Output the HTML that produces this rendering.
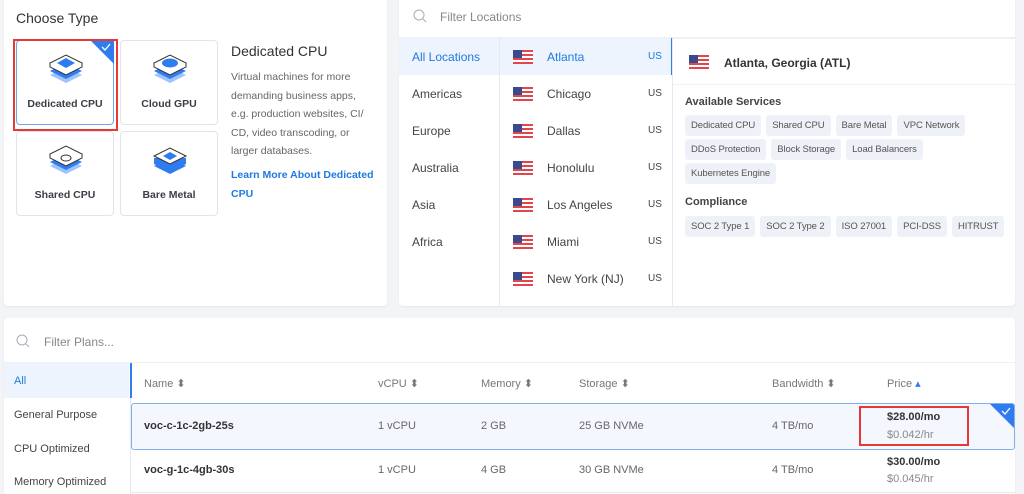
<!DOCTYPE html>
<html style="width:1024px;height:494px;overflow:hidden"><head><style>
*{box-sizing:border-box;margin:0;padding:0}
body{width:1024px;height:494px;background:#f3f4f7;font-family:"Liberation Sans",sans-serif;position:relative;overflow:hidden;color:#32363c}
.p{position:absolute;background:#fff;border-radius:4px;box-shadow:0 1px 2px rgba(0,0,0,.06)}
.a{position:absolute}
.card{position:absolute;width:98px;height:85px;border:1px solid #e1e4ea;border-radius:4px;background:#fff;font-size:10.5px;font-weight:bold;color:#3a3e45;text-align:center}
.card .t{position:absolute;left:0;right:0;bottom:14px}
.reg{position:absolute;left:0;width:100px;height:37px;font-size:12px;color:#444;padding:12px 13px}
.city{position:absolute;left:0;width:173px;height:37px;font-size:12px;color:#444}
.city .f{position:absolute;left:13px;top:12px}
.city .n{position:absolute;left:47px;top:12px}
.city .c{position:absolute;left:148px;top:13px;font-size:10px}
.row{height:24px;white-space:nowrap}
.tag{display:inline-block;background:#eef1f7;border-radius:3px;font-size:9.5px;line-height:11px;color:#555;padding:5px 6px;margin:0 5px 0 0;letter-spacing:-0.1px}
.th{position:absolute;top:377px;font-size:11px;color:#777}
.td{position:absolute;font-size:11px;color:#666}
.cat{position:absolute;left:14px;font-size:11px;color:#444}
</style></head><body>
<svg width="0" height="0" style="position:absolute"><defs>
<g id="flag"><rect width="20" height="14" fill="#fff"/><rect y="0" width="20" height="2" fill="#e0464c"/><rect y="4" width="20" height="2" fill="#e0464c"/><rect y="8" width="20" height="2" fill="#e0464c"/><rect y="12" width="20" height="2" fill="#e0464c"/><rect width="9" height="8" fill="#3b4a8a"/></g>
</defs></svg>

<div class="p" style="left:4px;top:-4px;width:383px;height:310px">
<div class="a" style="left:12px;top:14px;font-size:14px;color:#333">Choose Type</div>
</div>
<div class="card" style="left:16px;top:40px;border-color:#6aa6f0">
<svg class="a" style="left:30px;top:12px" width="38" height="34" viewBox="0 0 38 34"><path d="M3 22 L19 30 L35 22 L19 14Z" fill="#9ec4fb"/><path d="M3 18 L19 26 L35 18 L19 10Z" fill="#2f7cf0"/><path d="M3 10 L19 18 L35 10 L19 2Z" fill="#fff" stroke="#333"/><path d="M3 10v4l16 8 16-8v-4" fill="#fff" stroke="#333"/><path d="M10 10 L19 5 L28 10 L19 15Z" fill="#2f7cf0"/></svg>
<div class="t">Dedicated CPU</div>
<svg class="a" style="right:-1px;top:-1px" width="24" height="24"><path d="M0 0H24V24Z" fill="#2f7cf0"/><path d="M12 7l3 3 5-6" stroke="#fff" fill="none" stroke-width="1.3"/></svg>
</div>
<div class="a" style="left:13px;top:39px;width:105px;height:92px;border:2px solid #e53935"></div>
<div class="card" style="left:120px;top:40px">
<svg class="a" style="left:30px;top:12px" width="38" height="34" viewBox="0 0 38 34"><path d="M3 22 L19 30 L35 22 L19 14Z" fill="#9ec4fb"/><path d="M3 18 L19 26 L35 18 L19 10Z" fill="#2f7cf0"/><path d="M3 10 L19 18 L35 10 L19 2Z" fill="#fff" stroke="#333"/><path d="M3 10v4l16 8 16-8v-4" fill="#fff" stroke="#333"/><ellipse cx="19" cy="10" rx="8" ry="4.5" fill="#2f7cf0"/></svg>
<div class="t">Cloud GPU</div></div>
<div class="card" style="left:16px;top:131px">
<svg class="a" style="left:30px;top:12px" width="38" height="34" viewBox="0 0 38 34"><path d="M3 22 L19 30 L35 22 L19 14Z" fill="#9ec4fb"/><path d="M3 18 L19 26 L35 18 L19 10Z" fill="#2f7cf0"/><path d="M3 10 L19 18 L35 10 L19 2Z" fill="#fff" stroke="#333"/><path d="M3 10v4l16 8 16-8v-4" fill="#fff" stroke="#333"/><ellipse cx="19" cy="14" rx="5" ry="3" fill="#fff" stroke="#333"/></svg>
<div class="t">Shared CPU</div></div>
<div class="card" style="left:120px;top:131px">
<svg class="a" style="left:30px;top:12px" width="38" height="34" viewBox="0 0 38 34"><path d="M3 22 L19 30 L35 22 L19 14Z" fill="#2f7cf0"/><path d="M3 14v6l16 8 16-8v-6" fill="#2f7cf0"/><path d="M3 12 L19 20 L35 12 L19 4Z" fill="#fff" stroke="#333"/><path d="M12 12 L19 8 L26 12 L19 16Z" fill="#2f7cf0"/></svg>
<div class="t">Bare Metal</div></div>
<div class="a" style="left:231px;top:43px;font-size:14px;color:#333">Dedicated CPU</div>
<div class="a" style="left:231px;top:68px;width:142px;font-size:10.5px;line-height:18.5px;color:#666">Virtual machines for more demanding business apps, e.g. production websites, CI/ CD, video transcoding, or larger databases.</div>
<div class="a" style="left:231px;top:166px;width:145px;font-size:10.5px;line-height:18.5px;color:#1f7ae0;font-weight:bold">Learn More About Dedicated CPU</div>

<div class="p" style="left:399px;top:-4px;width:616px;height:310px">
<svg class="a" style="left:14px;top:13px" width="14" height="14"><circle cx="6" cy="6" r="5" stroke="#aab" fill="none"/><path d="M10 10l3 3" stroke="#aab"/></svg>
<div class="a" style="left:41px;top:14px;font-size:12px;color:#888">Filter Locations</div>
<div class="a" style="left:0;top:41px;width:616px;height:2px;background:#eef0f3"></div>
<div class="a" style="left:0;top:42px;width:100px;height:268px">
<div class="reg" style="top:0;background:#edf4fe;color:#1f7ae0">All Locations</div>
<div class="reg" style="top:37px">Americas</div><div class="reg" style="top:74px">Europe</div>
<div class="reg" style="top:111px">Australia</div><div class="reg" style="top:148px">Asia</div><div class="reg" style="top:185px">Africa</div>
</div>
<div class="a" style="left:100px;top:42px;width:1px;height:268px;background:#e6e9ee"></div>
<div class="a" style="left:101px;top:42px;width:172px;height:268px">
<div class="city" style="top:0;background:#edf4fe;color:#1f7ae0;border-right:2px solid #2f7cf0"><svg class="f" width="20" height="14"><use href="#flag"/></svg><span class="n">Atlanta</span><span class="c">US</span></div>
<div class="city" style="top:37px"><svg class="f" width="20" height="14"><use href="#flag"/></svg><span class="n">Chicago</span><span class="c">US</span></div>
<div class="city" style="top:74px"><svg class="f" width="20" height="14"><use href="#flag"/></svg><span class="n">Dallas</span><span class="c">US</span></div>
<div class="city" style="top:111px"><svg class="f" width="20" height="14"><use href="#flag"/></svg><span class="n">Honolulu</span><span class="c">US</span></div>
<div class="city" style="top:148px"><svg class="f" width="20" height="14"><use href="#flag"/></svg><span class="n">Los Angeles</span><span class="c">US</span></div>
<div class="city" style="top:185px"><svg class="f" width="20" height="14"><use href="#flag"/></svg><span class="n">Miami</span><span class="c">US</span></div>
<div class="city" style="top:222px"><svg class="f" width="20" height="14"><use href="#flag"/></svg><span class="n">New York (NJ)</span><span class="c">US</span></div>
</div>
<div class="a" style="left:273px;top:42px;width:1px;height:268px;background:#e6e9ee"></div>
<svg class="a" style="left:290px;top:59px" width="20" height="14"><use href="#flag"/></svg>
<div class="a" style="left:325px;top:60px;font-size:12px;font-weight:bold;color:#333">Atlanta, Georgia (ATL)</div>
<div class="a" style="left:274px;top:88px;width:342px;height:1px;background:#eef0f3"></div>
<div class="a" style="left:286px;top:100px;font-size:11px;font-weight:bold;color:#444">Available Services</div>
<div class="a" style="left:286px;top:119px">
<div class="row"><span class="tag">Dedicated CPU</span><span class="tag">Shared CPU</span><span class="tag">Bare Metal</span><span class="tag">VPC Network</span></div>
<div class="row"><span class="tag">DDoS Protection</span><span class="tag">Block Storage</span><span class="tag">Load Balancers</span></div>
<div class="row"><span class="tag">Kubernetes Engine</span></div></div>
<div class="a" style="left:286px;top:200px;font-size:11px;font-weight:bold;color:#444">Compliance</div>
<div class="a" style="left:286px;top:220px"><div class="row"><span class="tag">SOC 2 Type 1</span><span class="tag">SOC 2 Type 2</span><span class="tag">ISO 27001</span><span class="tag">PCI-DSS</span><span class="tag">HITRUST</span></div></div>
</div>

<div class="p" style="left:4px;top:318px;width:1011px;height:190px">
<svg class="a" style="left:12px;top:16px" width="14" height="14"><circle cx="6" cy="6" r="5" stroke="#aab" fill="none"/><path d="M10 10l3 3" stroke="#aab"/></svg>
<div class="a" style="left:40px;top:17px;font-size:12px;color:#888">Filter Plans...</div>
<div class="a" style="left:0;top:44px;width:1011px;height:1px;background:#eef0f3"></div>
<div class="a" style="left:0;top:45px;width:125px;height:35px;background:#edf4fe"></div>
<div class="a" style="left:126px;top:45px;width:1px;height:150px;background:#e6e9ee"></div>
<div class="a" style="left:126px;top:45px;width:2px;height:35px;background:#2f7cf0"></div>
</div>
<div class="cat" style="top:375px;color:#1f7ae0">All</div>
<div class="cat" style="top:409px">General Purpose</div>
<div class="cat" style="top:443px">CPU Optimized</div>
<div class="cat" style="top:476px">Memory Optimized</div>
<div class="th" style="left:144px">Name ⬍</div><div class="th" style="left:378px">vCPU ⬍</div><div class="th" style="left:481px">Memory ⬍</div><div class="th" style="left:579px">Storage ⬍</div><div class="th" style="left:772px">Bandwidth ⬍</div><div class="th" style="left:887px">Price <span style="color:#2f7cf0">▴</span></div>
<div class="a" style="left:131px;top:403px;width:884px;height:47px;background:#f4f8fe;border:1px solid #7fb0f2;border-radius:3px;overflow:hidden">
<svg class="a" style="right:0;top:0" width="24" height="24"><path d="M0 0H24V24Z" fill="#2f7cf0"/><path d="M12 7l3 3 5-6" stroke="#fff" fill="none" stroke-width="1.3"/></svg></div>
<div class="a" style="left:131px;top:492px;width:884px;height:1px;background:#e6e9ee"></div>
<div class="td" style="left:144px;top:420px;font-weight:bold;color:#333">voc-c-1c-2gb-25s</div>
<div class="td" style="left:378px;top:420px">1 vCPU</div><div class="td" style="left:481px;top:420px">2 GB</div><div class="td" style="left:579px;top:420px">25 GB NVMe</div><div class="td" style="left:772px;top:420px">4 TB/mo</div>
<div class="td" style="left:887px;top:411px;font-weight:bold;color:#333">$28.00/mo</div><div class="td" style="left:887px;top:429px;color:#888">$0.042/hr</div>
<div class="a" style="left:859px;top:406px;width:110px;height:40px;border:2px solid #e53935"></div>
<div class="td" style="left:144px;top:464px;font-weight:bold;color:#333">voc-g-1c-4gb-30s</div>
<div class="td" style="left:378px;top:464px">1 vCPU</div><div class="td" style="left:481px;top:464px">4 GB</div><div class="td" style="left:579px;top:464px">30 GB NVMe</div><div class="td" style="left:772px;top:464px">4 TB/mo</div>
<div class="td" style="left:887px;top:456px;font-weight:bold;color:#333">$30.00/mo</div><div class="td" style="left:887px;top:473px;color:#888">$0.045/hr</div>
</body></html>
